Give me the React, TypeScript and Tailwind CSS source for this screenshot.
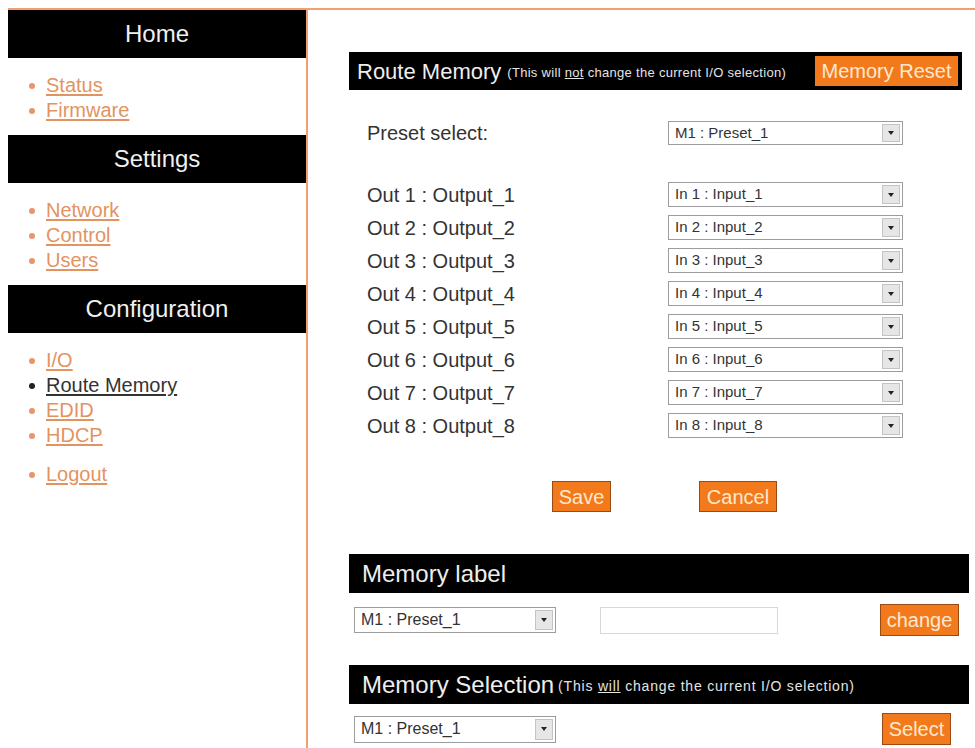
import React from "react";

const ORANGE_LINE = "border-[#f0a070]";

const SideHeader = ({ title }: { title: string }) => (
  <div className="h-[48px] bg-black flex items-center justify-center text-[24px] text-[#f0f0f0]">
    {title}
  </div>
);

const SideLink = ({ label, active }: { label: string; active?: boolean }) => (
  <li className="flex items-center h-[25px]">
    <span
      className={`w-[6px] h-[6px] rounded-full mr-[11px] ${active ? "bg-[#222]" : "bg-[#e8956a]"}`}
    />
    <a
      href="#"
      className={`text-[20px] leading-[25px] underline underline-offset-2 ${
        active ? "text-[#333]" : "text-[#e3935f] decoration-[#e3935f]"
      }`}
    >
      {label}
    </a>
  </li>
);

const FakeSelect = ({
  value,
  className,
  textSize = "text-[15px]",
}: {
  value: string;
  className: string;
  textSize?: string;
}) => (
  <div
    className={`flex items-stretch border border-[#9c9c9c] bg-white ${className}`}
  >
    <span className={`flex-1 pl-[6px] flex items-center text-[#333] ${textSize}`}>
      {value}
    </span>
    <span className="w-[18px] my-[2px] mr-[2px] border border-[#c4c4c4] bg-[#e6e6e6] flex items-center justify-center">
      <span className="w-0 h-0 border-l-[3px] border-r-[3px] border-t-[4px] border-l-transparent border-r-transparent border-t-[#222]" />
    </span>
  </div>
);

const OrangeButton = ({
  children,
  className,
}: {
  children: React.ReactNode;
  className: string;
}) => (
  <button
    type="button"
    className={`bg-[#f27a1c] border border-[#9b4a12] text-[#fde8cf] text-[20px] leading-none flex items-center justify-center ${className}`}
  >
    {children}
  </button>
);

export default function App() {
  const outputs = [1, 2, 3, 4, 5, 6, 7, 8];

  return (
    <div className="min-h-[748px] bg-white font-['Liberation_Sans',Arial,sans-serif] overflow-hidden">
      <div className={`ml-2 mt-2 border-t-2 ${ORANGE_LINE} flex`}>
        {/* sidebar */}
        <aside className="w-[298px] shrink-0">
          <SideHeader title="Home" />
          <ul className="pl-[21px] mt-[15px] mb-[12px]">
            <SideLink label="Status" />
            <SideLink label="Firmware" />
          </ul>
          <SideHeader title="Settings" />
          <ul className="pl-[21px] mt-[15px] mb-[12px]">
            <SideLink label="Network" />
            <SideLink label="Control" />
            <SideLink label="Users" />
          </ul>
          <SideHeader title="Configuration" />
          <ul className="pl-[21px] mt-[15px]">
            <SideLink label="I/O" />
            <SideLink label="Route Memory" active />
            <SideLink label="EDID" />
            <SideLink label="HDCP" />
          </ul>
          <ul className="pl-[21px] mt-[14px]">
            <SideLink label="Logout" />
          </ul>
        </aside>

        {/* main content */}
        <main className={`flex-1 border-l-2 ${ORANGE_LINE} pl-[41px] pt-[42px] min-h-[738px]`}>
          {/* route memory header */}
          <div className="w-[613px] h-[38px] bg-black flex items-center pl-[8px] pr-[4px]">
            <span className="text-[22px] text-[#eeeeee]">Route Memory</span>
            <span className="text-[13px] tracking-[0.3px] text-[#e4e4e4] ml-[6px] mt-[4px]">
              (This will <span className="underline">not</span> change the current I/O selection)
            </span>
            <OrangeButton className="ml-auto w-[143px] h-[30px] border-0">
              Memory Reset
            </OrangeButton>
          </div>

          <div className="flex items-center pl-[18px] mt-[31px] h-[24px]">
            <span className="w-[301px] text-[20px] text-[#333]">Preset select:</span>
            <FakeSelect value="M1 : Preset_1" className="w-[235px] h-[24px]" />
          </div>

          <div className="mt-[37px] flex flex-col gap-[8px]">
            {outputs.map((n) => (
              <div key={n} className="flex items-center pl-[18px] h-[25px]">
                <span className="w-[301px] text-[20px] text-[#333]">
                  Out {n} : Output_{n}
                </span>
                <FakeSelect value={`In ${n} : Input_${n}`} className="w-[235px] h-[25px]" />
              </div>
            ))}
          </div>

          <div className="flex mt-[43px] pl-[203px]">
            <OrangeButton className="w-[59px] h-[31px]">Save</OrangeButton>
            <OrangeButton className="w-[78px] h-[31px] ml-[88px]">Cancel</OrangeButton>
          </div>

          {/* memory label */}
          <div className="w-[620px] h-[39px] bg-black flex items-center pl-[13px] mt-[42px]">
            <span className="text-[24px] text-[#eeeeee]">Memory label</span>
          </div>
          <div className="w-[620px] flex items-center mt-[11px] h-[32px]">
            <FakeSelect
              value="M1 : Preset_1"
              textSize="text-[16px]"
              className="ml-[5px] w-[202px] h-[26px]"
            />
            <div className="ml-[44px] w-[178px] h-[27px] border border-[#d8d8d8] bg-white" />
            <OrangeButton className="ml-auto mr-[10px] w-[79px] h-[32px]">change</OrangeButton>
          </div>

          {/* memory selection */}
          <div className="w-[620px] h-[39px] bg-black flex items-center pl-[13px] mt-[29px]">
            <span className="text-[24px] text-[#eeeeee]">Memory Selection</span>
            <span className="text-[14px] tracking-[0.8px] text-[#e4e4e4] ml-[4px] mt-[4px]">
              (This <span className="underline">will</span> change the current I/O selection)
            </span>
          </div>
          <div className="w-[620px] flex items-center mt-[9px] h-[32px]">
            <FakeSelect
              value="M1 : Preset_1"
              textSize="text-[16px]"
              className="ml-[5px] w-[202px] h-[27px]"
            />
            <OrangeButton className="ml-auto mr-[18px] w-[69px] h-[32px]">Select</OrangeButton>
          </div>
        </main>
      </div>
    </div>
  );
}
